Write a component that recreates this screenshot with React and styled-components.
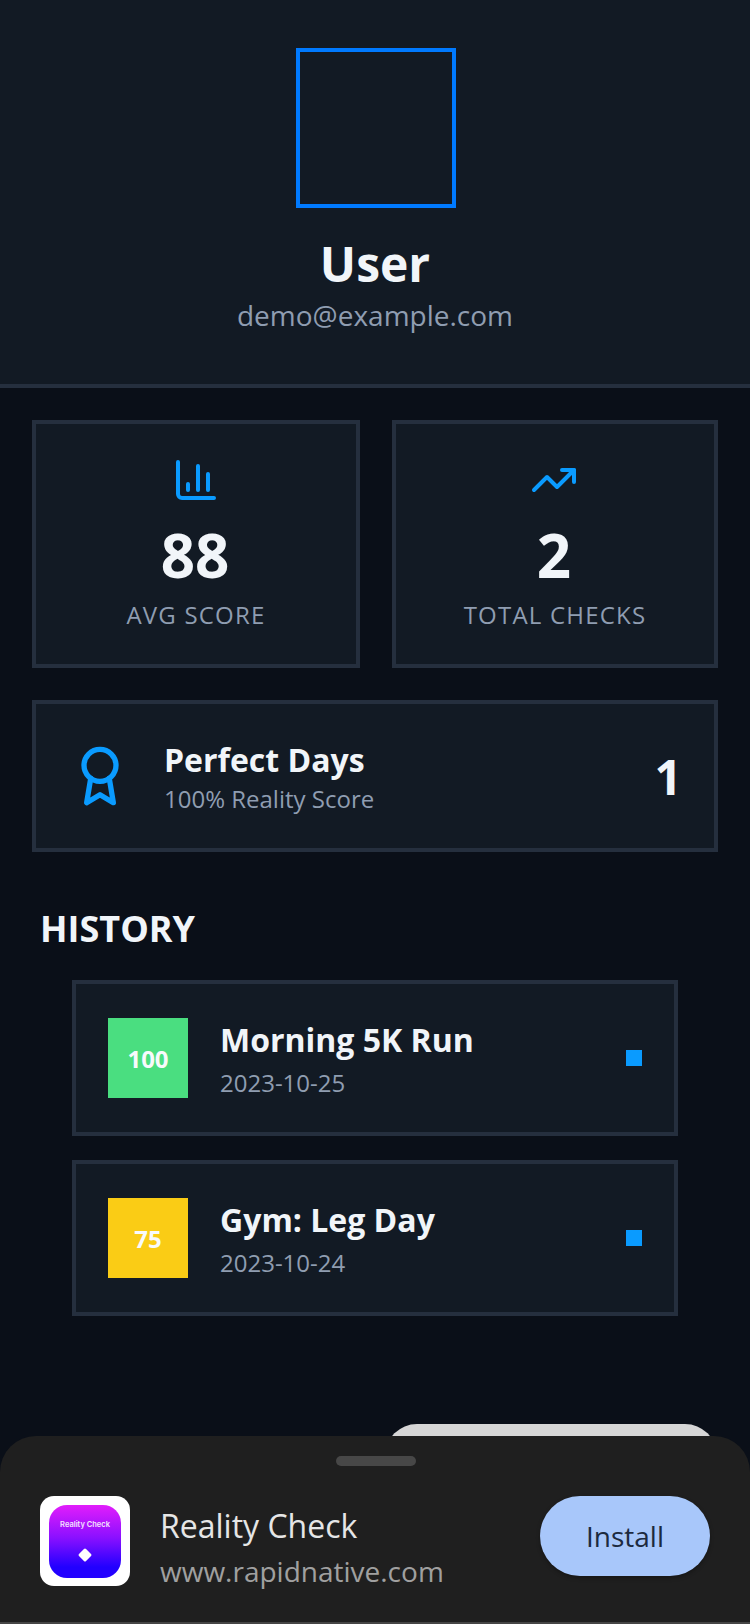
import React from "react";
import styled, { createGlobalStyle } from "styled-components";
import { ChartColumn, TrendingUp } from "lucide-react";

const Global = createGlobalStyle`
  html, body { margin: 0; padding: 0; background: #0a0f18; }
  * { box-sizing: border-box; }
`;

const Screen = styled.div`
  position: relative;
  width: 750px;
  height: 1624px;
  overflow: hidden;
  background: #0a0f18;
  font-family: "Open Sans", "Noto Sans", sans-serif;
  color: #f1f5f9;
  display: flex;
  flex-direction: column;
`;

const Header = styled.header`
  height: 388px;
  padding-top: 48px;
  background: #121a24;
  border-bottom: 4px solid #252f3e;
  display: flex;
  flex-direction: column;
  align-items: center;
`;

const Avatar = styled.div`
  width: 160px;
  height: 160px;
  margin-left: 2px;
  border: 4px solid #007aff;
`;

const Name = styled.h1`
  margin: 24px 0 0;
  font-size: 48px;
  line-height: 64px;
  font-weight: 700;
`;

const Email = styled.div`
  margin-top: -1px;
  font-size: 28px;
  line-height: 40px;
  color: #8f9db1;
`;

const Content = styled.main`
  padding: 32px;
  display: flex;
  flex-direction: column;
  gap: 32px;
`;

const StatGrid = styled.div`
  display: grid;
  grid-template-columns: 328px 326px;
  gap: 32px;
`;

const Card = styled.div`
  background: #121a24;
  border: 4px solid #252f3e;
`;

const StatCard = styled(Card)`
  height: 248px;
  padding: 32px;
  display: flex;
  flex-direction: column;
  align-items: center;
  color: #0a9bff;
`;

const TrendIcon = styled(TrendingUp)`
  margin-right: 2px;
`;

const StatValue = styled.div`
  margin: 13px 2px 0 0;
  font-size: 60px;
  line-height: 76px;
  font-weight: 700;
  color: #f1f5f9;
`;

const StatLabel = styled.div`
  margin-top: 6px;
  font-size: 24px;
  line-height: 32px;
  letter-spacing: 1.2px;
  color: #8f9db1;
`;

const PerfectCard = styled(Card)`
  height: 152px;
  padding: 0 32px;
  display: flex;
  align-items: center;
  gap: 32px;
  color: #0a9bff;
`;

const PerfectText = styled.div`
  flex: 1;
`;

const PerfectTitle = styled.div`
  font-size: 32px;
  line-height: 44px;
  font-weight: 700;
  color: #f1f5f9;
`;

const PerfectSub = styled.div`
  margin-top: 1px;
  font-size: 24px;
  line-height: 32px;
  color: #8f9db1;
`;

const PerfectValue = styled.div`
  margin-top: 2px;
  font-size: 48px;
  line-height: 64px;
  font-weight: 700;
  color: #f1f5f9;
`;

const SectionTitle = styled.h2`
  margin: 21px 0 0 8px;
  font-size: 36px;
  line-height: 48px;
  font-weight: 700;
`;

const HistoryList = styled.div`
  margin: -5px 8px 0 40px;
  display: flex;
  flex-direction: column;
  gap: 24px;
  width: 606px;
`;

const HistoryRow = styled(Card)`
  height: 156px;
  padding: 0 32px;
  display: flex;
  align-items: center;
  gap: 32px;
`;

const Score = styled.div`
  width: 80px;
  height: 80px;
  flex: none;
  background: ${(p) => p.$bg};
  display: flex;
  align-items: center;
  justify-content: center;
  font-size: 24px;
  font-weight: 700;
  color: #f8fafc;
`;

const RowText = styled.div`
  flex: 1;
`;

const RowTitle = styled.div`
  margin-bottom: 5px;
  font-size: 32px;
  line-height: 44px;
  font-weight: 700;
  color: #f1f5f9;
`;

const RowDate = styled.div`
  font-size: 24px;
  line-height: 32px;
  color: #8f9db1;
`;

const Dot = styled.div`
  width: 16px;
  height: 16px;
  background: #0a9bff;
`;

const BackPill = styled.div`
  position: absolute;
  left: 385px;
  top: 1424px;
  width: 332px;
  height: 80px;
  border-radius: 32px;
  background: #d6d6d6;
`;

const Sheet = styled.div`
  position: absolute;
  left: 0;
  right: 0;
  bottom: 0;
  height: 188px;
  padding: 20px 40px 0;
  background: #1f1f1f;
  border-radius: 36px 36px 0 0;
  border-bottom: 2px solid #454545;
`;

const Handle = styled.div`
  width: 80px;
  height: 10px;
  margin: 0 0 30px 296px;
  border-radius: 5px;
  background: #474747;
`;

const SheetRow = styled.div`
  display: flex;
  align-items: flex-start;
`;

const AppIcon = styled.div`
  width: 90px;
  height: 90px;
  flex: none;
  border-radius: 14px;
  background: #fff;
  display: flex;
  align-items: center;
  justify-content: center;
`;

const AppIconInner = styled.div`
  width: 72px;
  height: 73px;
  border-radius: 18px;
  background: linear-gradient(180deg, #e21dfb 0%, #8a10ff 45%, #2200ff 85%);
  display: flex;
  flex-direction: column;
  align-items: center;
  padding-top: 15px;
`;

const AppIconLabel = styled.div`
  font-family: Inter, sans-serif;
  font-size: 7.5px;
  line-height: 10px;
  font-weight: 600;
  color: #f4e3ff;
  white-space: nowrap;
`;

const Diamond = styled.div`
  width: 10px;
  height: 10px;
  margin-top: 20px;
  border-radius: 1.5px;
  background: #fff;
  transform: rotate(45deg);
`;

const AppText = styled.div`
  flex: 1;
  margin-left: 30px;
`;

const AppName = styled.div`
  margin-top: 8px;
  font-size: 32px;
  line-height: 44px;
  color: #e6e6e6;
`;

const AppUrl = styled.div`
  margin-top: 3px;
  font-size: 28px;
  line-height: 40px;
  color: #a0a0a0;
`;

const InstallButton = styled.button`
  width: 170px;
  height: 80px;
  border: 0;
  border-radius: 40px;
  background: #a8c7fa;
  color: #1c2a3f;
  font-family: inherit;
  font-size: 28px;
  box-shadow: 0 2px 4px rgba(0, 0, 0, 0.3);
`;

const RibbonIcon = () => (
  <svg width="64" height="64" viewBox="0 0 24 24" fill="none" stroke="currentColor" strokeWidth="2" strokeLinecap="round" strokeLinejoin="round">
    <circle cx="12" cy="8" r="6" />
    <path d="M15.477 12.89 17 22l-5-3-5 3 1.523-9.11" />
  </svg>
);

export default function App() {
  return (
    <Screen>
      <Global />
      <Header>
        <Avatar />
        <Name>User</Name>
        <Email>demo@example.com</Email>
      </Header>
      <Content>
        <StatGrid>
          <StatCard>
            <ChartColumn size={48} />
            <StatValue>88</StatValue>
            <StatLabel>AVG SCORE</StatLabel>
          </StatCard>
          <StatCard>
            <TrendIcon size={48} />
            <StatValue>2</StatValue>
            <StatLabel>TOTAL CHECKS</StatLabel>
          </StatCard>
        </StatGrid>
        <PerfectCard>
          <RibbonIcon />
          <PerfectText>
            <PerfectTitle>Perfect Days</PerfectTitle>
            <PerfectSub>100% Reality Score</PerfectSub>
          </PerfectText>
          <PerfectValue>1</PerfectValue>
        </PerfectCard>
        <SectionTitle>HISTORY</SectionTitle>
        <HistoryList>
          <HistoryRow>
            <Score $bg="#4ade80">100</Score>
            <RowText>
              <RowTitle>Morning 5K Run</RowTitle>
              <RowDate>2023-10-25</RowDate>
            </RowText>
            <Dot />
          </HistoryRow>
          <HistoryRow>
            <Score $bg="#facc15">75</Score>
            <RowText>
              <RowTitle>Gym: Leg Day</RowTitle>
              <RowDate>2023-10-24</RowDate>
            </RowText>
            <Dot />
          </HistoryRow>
        </HistoryList>
      </Content>
      <BackPill />
      <Sheet>
        <Handle />
        <SheetRow>
          <AppIcon>
            <AppIconInner>
              <AppIconLabel>Reality Check</AppIconLabel>
              <Diamond />
            </AppIconInner>
          </AppIcon>
          <AppText>
            <AppName>Reality Check</AppName>
            <AppUrl>www.rapidnative.com</AppUrl>
          </AppText>
          <InstallButton>Install</InstallButton>
        </SheetRow>
      </Sheet>
    </Screen>
  );
}
